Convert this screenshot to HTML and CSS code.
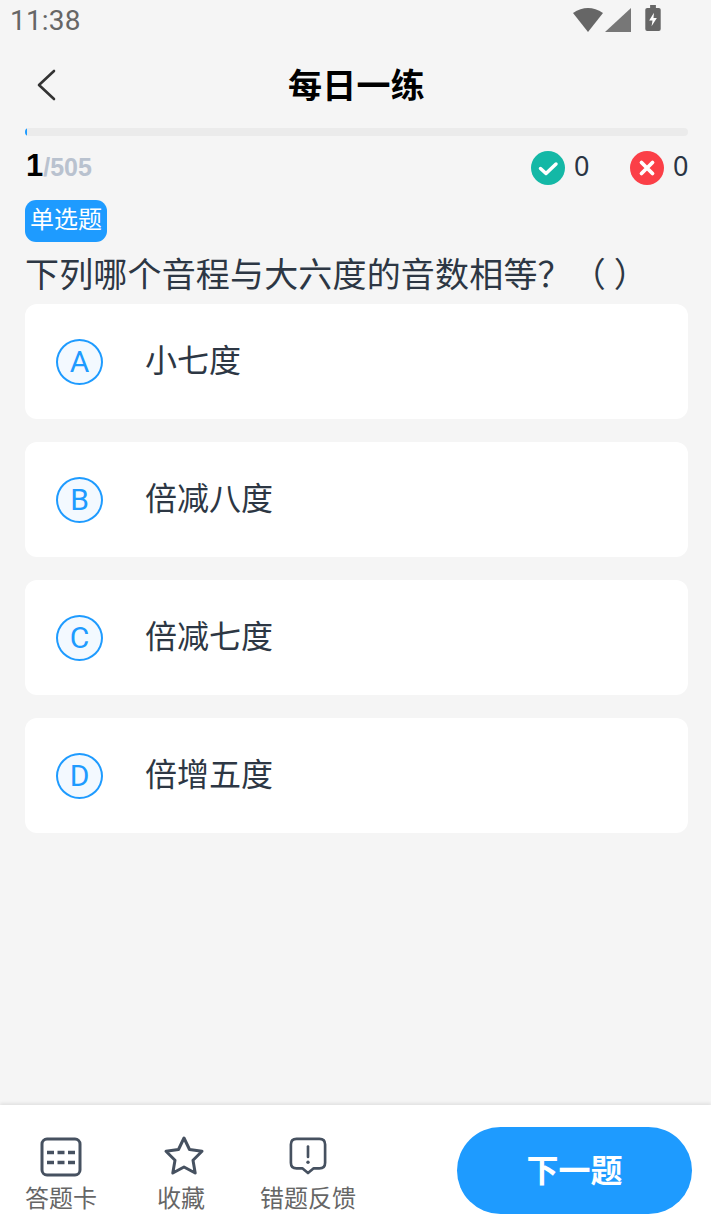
FILE: index.html
```html
<!DOCTYPE html>
<html lang="zh">
<head>
<meta charset="utf-8">
<title>每日一练</title>
<link rel="stylesheet" href="styles.css">
</head>
<body>
<div class="app">
  <div class="status">
    <span class="time">11:38</span>
    <div class="status-icons">
      <svg class="wifi" width="30" height="25" viewBox="0 0 30 25"><path d="M0 6 Q15 -4 30 6 L15 25 Z" fill="#666"/></svg>
      <svg class="signal" width="26" height="24" viewBox="0 0 26 24"><path d="M0 24 L26 0 V24 Z" fill="#777"/></svg>
      <svg class="battery" width="16" height="26" viewBox="0 0 16 27"><path d="M5 0 H11 V3 H14 Q16 3 16 5 V25 Q16 27 14 27 H2 Q0 27 0 25 V5 Q0 3 2 3 H5 Z" fill="#666"/><path d="M9 8 L4 16 H7.500 L6.500 22 L12 13.500 H8.500 Z" fill="#fff"/></svg>
    </div>
  </div>
  <header class="nav">
    <svg class="back" width="24" height="34" viewBox="0 0 24 34"><path d="M18 3 L3 17 L18 31" fill="none" stroke="#333" stroke-width="2.600" stroke-linecap="round" stroke-linejoin="round"/></svg>
    <h1>每日一练</h1>
  </header>
  <main class="content">
    <div class="progress"><div class="progress-fill"></div></div>
    <div class="stats">
      <div class="count"><b>1</b><span>/505</span></div>
      <div class="scores">
        <div class="score">
          <svg width="34" height="34" viewBox="0 0 34 34"><circle cx="17" cy="17" r="17" fill="#14b8a6"/><path d="M9.500 17.500 L15 22.500 L25 13" fill="none" stroke="#fff" stroke-width="3.500" stroke-linecap="round" stroke-linejoin="round"/></svg>
          <span>0</span>
        </div>
        <div class="score">
          <svg width="34" height="34" viewBox="0 0 34 34"><circle cx="17" cy="17" r="17" fill="#fb3f47"/><path d="M11.500 11.500 L22.500 22.500 M22.500 11.500 L11.500 22.500" fill="none" stroke="#fff" stroke-width="3.800" stroke-linecap="round"/></svg>
          <span>0</span>
        </div>
      </div>
    </div>
    <div class="tag">单选题</div>
    <div class="question">下列哪个音程与大六度的音数相等？（ ）</div>
    <div class="options">
      <div class="option"><span class="letter">A</span><span class="label">小七度</span></div>
      <div class="option"><span class="letter">B</span><span class="label">倍减八度</span></div>
      <div class="option"><span class="letter">C</span><span class="label">倍减七度</span></div>
      <div class="option"><span class="letter">D</span><span class="label">倍增五度</span></div>
    </div>
  </main>
  <footer class="bar">
    <div class="tools">
      <div class="tool tool-card">
        <svg width="42" height="40" viewBox="0 0 42 40"><rect x="2" y="2" width="38" height="36" rx="5" fill="none" stroke="#465160" stroke-width="3"/><path d="M7 15.500 H35 M7 25.500 H35" fill="none" stroke="#465160" stroke-width="3.600" stroke-dasharray="7 3.500"/></svg>
        <span>答题卡</span>
      </div>
      <div class="tool tool-star">
        <svg width="44" height="42" viewBox="0 0 44 42"><path d="M22 3 L27.500 14.500 L40 16.300 L31 25.200 L33.200 38 L22 32 L10.800 38 L13 25.200 L4 16.300 L16.500 14.500 Z" fill="none" stroke="#465160" stroke-width="3" stroke-linejoin="round"/></svg>
        <span>收藏</span>
      </div>
      <div class="tool tool-report">
        <svg width="38" height="38" viewBox="0 0 40 40"><path d="M8 2 H32 Q38 2 38 8 V27 Q38 33 32 33 H26 L20 38 L14 33 H8 Q2 33 2 27 V8 Q2 2 8 2 Z" fill="none" stroke="#465160" stroke-width="2.800" stroke-linejoin="round"/><path d="M20 10 V21" stroke="#465160" stroke-width="2.800" stroke-linecap="round"/><circle cx="20" cy="26.500" r="1.800" fill="#465160"/></svg>
        <span>错题反馈</span>
      </div>
    </div>
    <button class="next">下一题</button>
  </footer>
</div>
</body>
</html>
```
FILE: styles.css
```css
* { box-sizing: border-box; }
html, body { margin: 0; padding: 0; }
body {
  width: 711px;
  height: 1227px;
  overflow: hidden;
  background: #f5f5f5;
  font-family: "Noto Sans CJK SC", "Liberation Sans", sans-serif;
}
.app { width: 711px; height: 1227px; display: flex; flex-direction: column; }
.status {
  height: 40px;
  display: flex;
  align-items: flex-start;
  justify-content: space-between;
  padding: 5px 50px 0 10px;
}
.time { font: 28px/32px Roboto, sans-serif; color: #666; letter-spacing: 0.2px; }
.status-icons { display: flex; align-items: flex-start; }
.wifi { margin-right: 2px; margin-top: 2px; }
.signal { margin-right: 14px; margin-top: 3px; }
.nav {
  height: 86px;
  padding-top: 1px;
  display: flex;
  align-items: flex-start;
  justify-content: center;
  position: relative;
}
.back { position: absolute; left: 36px; top: 28px; }
h1 {
  margin: 0 0 0 2px;
  padding-top: 21px;
  font-size: 34px;
  line-height: 44px;
  font-weight: 700;
  letter-spacing: 0.3px;
  color: #000;
}
.content { flex: 1; padding: 2px 23px 0 25px; }
.progress { height: 8px; border-radius: 4px; background: #ebebeb; overflow: hidden; }
.progress-fill { width: 2px; height: 8px; background: #1e9bff; }
.stats {
  height: 56px;
  margin-top: 8px;
  display: flex;
  justify-content: space-between;
  align-items: flex-start;
}
.count { font-family: "Liberation Sans", sans-serif; font-weight: 700; line-height: 44px; height: 44px; padding-left: 1px; }
.count b { font-size: 31px; color: #000; }
.count span { font-size: 25px; color: #b9c2cf; }
.scores { display: flex; gap: 41px; padding-top: 7px; }
.score { display: flex; align-items: flex-start; gap: 9px; }
.score span { font: 27px/30px "Noto Sans", sans-serif; color: #2a3443; width: 15px; }
.tag {
  width: 82px;
  height: 42px;
  border-radius: 11px;
  background: #1e9bff;
  color: #fff;
  font-size: 24px;
  line-height: 36px;
  text-align: center;
}
.question {
  margin-top: 7px;
  font-size: 34px;
  line-height: 47px;
  letter-spacing: 0.17px;
  color: #2d3744;
  white-space: nowrap;
}
.options { margin-top: 8px; display: flex; flex-direction: column; gap: 23px; }
.option {
  height: 115px;
  background: #fff;
  border-radius: 12px;
  display: flex;
  align-items: center;
  padding-left: 31px;
}
.letter {
  width: 47px;
  height: 46px;
  border: 2px solid #1e9bff;
  border-radius: 50%;
  background: #f3f9ff;
  color: #1e9bff;
  font: 30px/42px Roboto, sans-serif;
  text-align: center;
}
.label { margin: 0 0 8px 42px; font-size: 32px; line-height: 44px; color: #2d3744; }
.bar {
  height: 122px;
  background: #fff;
  box-shadow: 0 -2px 3px rgba(0, 0, 0, 0.08);
  display: flex;
  justify-content: space-between;
  align-items: flex-start;
  padding: 22px 19px 0 0;
}
.tools { display: flex; }
.tool {
  display: flex;
  flex-direction: column;
  align-items: center;
  color: #666;
  font-size: 24px;
  line-height: 32px;
  height: 96px;
  padding-top: 10px;
}
.tool svg { display: block; margin-bottom: 4px; }
.tool-card { width: 122px; }
.tool-star { width: 118px; padding-top: 8px; }
.tool-star svg { margin-left: 6px; }
.tool-report { width: 136px; }
.tool-report svg { margin-bottom: 6px; }
.next {
  width: 235px;
  height: 87px;
  border: 0;
  padding: 0 0 6px;
  border-radius: 44px;
  background: #1e9bff;
  color: #fff;
  font-family: inherit;
  font-size: 32px;
  font-weight: 700;
}
```
